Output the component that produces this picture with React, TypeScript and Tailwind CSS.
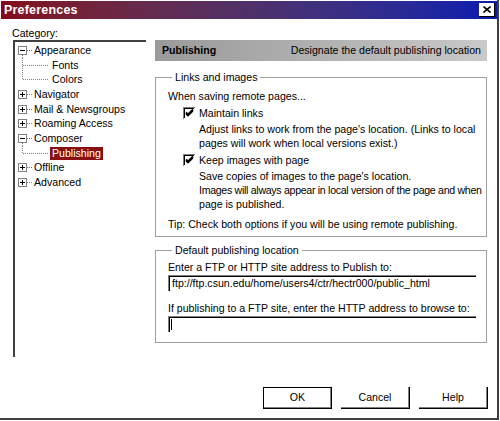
import React from 'react';

const font = { fontFamily: '"Liberation Sans", Arial, sans-serif' };

type Node = { label: string; level: 0 | 1; expander?: 'plus' | 'minus'; last?: boolean; selected?: boolean };

const tree: Node[] = [
  { label: 'Appearance', level: 0, expander: 'minus' },
  { label: 'Fonts', level: 1 },
  { label: 'Colors', level: 1, last: true },
  { label: 'Navigator', level: 0, expander: 'plus' },
  { label: 'Mail & Newsgroups', level: 0, expander: 'plus' },
  { label: 'Roaming Access', level: 0, expander: 'plus' },
  { label: 'Composer', level: 0, expander: 'minus' },
  { label: 'Publishing', level: 1, last: true, selected: true },
  { label: 'Offline', level: 0, expander: 'plus' },
  { label: 'Advanced', level: 0, expander: 'plus' },
];

const Connector: React.FC<{ node: Node }> = ({ node }) => {
  if (node.level === 0) {
    return (
      <svg width="17" height="15" className="shrink-0">
        <rect x="3.5" y="3.5" width="8" height="8" fill="#fff" stroke="#808080" />
        <line x1="5" y1="7.5" x2="10" y2="7.5" stroke="#000" />
        {node.expander === 'plus' && <line x1="7.5" y1="5" x2="7.5" y2="10" stroke="#000" />}
        <line x1="12" y1="7.5" x2="17" y2="7.5" stroke="#808080" strokeDasharray="1 1" />
        {node.expander === 'minus' && (
          <line x1="7.5" y1="12" x2="7.5" y2="15" stroke="#808080" strokeDasharray="1 1" />
        )}
      </svg>
    );
  }
  return (
    <svg width="35" height="15" className="shrink-0">
      <line x1="7.5" y1="0" x2="7.5" y2={node.last ? 7.5 : 15} stroke="#808080" strokeDasharray="1 1" />
      <line x1="8" y1="7.5" x2="34" y2="7.5" stroke="#808080" strokeDasharray="1 1" />
    </svg>
  );
};

const Checkbox: React.FC = () => (
  <svg width="13" height="13" className="shrink-0">
    <line x1="0" y1="0.5" x2="12" y2="0.5" stroke="#808080" />
    <line x1="0.5" y1="0" x2="0.5" y2="12" stroke="#808080" />
    <line x1="1" y1="1.5" x2="11" y2="1.5" stroke="#000" />
    <line x1="1.5" y1="1" x2="1.5" y2="11" stroke="#000" />
    <polyline points="3,5.5 5,7.5 10,2.5" fill="none" stroke="#000" strokeWidth="1.8" />
    <polyline points="3,7 5,9 10,4" fill="none" stroke="#000" strokeWidth="1.2" />
  </svg>
);

const Field: React.FC<{ value?: string; caret?: boolean }> = ({ value, caret }) => (
  <div className="w-[308px] h-[16px] border-t border-l border-[#808080] shadow-[inset_1px_1px_0_#000] flex items-center pl-[3px] leading-none whitespace-nowrap">
    {caret && <span className="w-[1px] h-[11px] bg-black ml-[-1px]" />}
    {value}
  </div>
);

const Button: React.FC<{ label: string; primary?: boolean }> = ({ label, primary }) => (
  <div
    className={`w-[69px] h-[22px] flex items-center justify-center shadow-[inset_-1px_-1px_0_#808080] ${
      primary ? 'border border-black' : 'border-r border-b border-black'
    }`}
  >
    {label}
  </div>
);

export default function App() {
  return (
    <div
      style={font}
      className="w-[499px] h-[420px] bg-white border-r-2 border-b-2 border-[#404040] text-[10.6px] text-black flex flex-col"
    >
      {/* title bar */}
      <div className="mt-[1px] ml-[1px] h-[18px] bg-linear-to-r from-[#840818] to-[#0818b0] flex items-center justify-between pl-[3px] pr-[2px]">
        <span className="text-white font-bold text-[12.5px] tracking-[0.2px]">Preferences</span>
        <div className="w-[16px] h-[14px] bg-white border-r border-b border-black flex items-center justify-center">
          <svg width="8" height="7">
            <path d="M0.5 0.5 L7.5 6.5 M7.5 0.5 L0.5 6.5" stroke="#000" strokeWidth="1.6" />
          </svg>
        </div>
      </div>

      <div className="flex mt-[7px]">
        {/* category tree */}
        <div className="ml-[12px] w-[134px] flex flex-col">
          <div className="h-[14px] leading-[14px]">Category:</div>
          <div className="ml-[1px] h-[317px] border-t-2 border-l-2 border-[#404040] pt-[1px]">
            {tree.map((n) => (
              <div key={n.label} className="h-[14.7px] flex items-center">
                <Connector node={n} />
                <span
                  className={`leading-[13px] px-[2px] whitespace-nowrap ${
                    n.selected ? 'bg-[#8a1010] text-white' : ''
                  }`}
                >
                  {n.label}
                </span>
              </div>
            ))}
          </div>
        </div>

        {/* right panel */}
        <div className="ml-[9px] w-[332px] pt-[14px] flex flex-col">
          <div className="h-[21px] bg-linear-to-r from-[#9a9a9a] to-[#c9c9c9] flex items-center justify-between pl-[7px] pr-[6px]">
            <span className="font-bold text-[10.6px]">Publishing</span>
            <span>Designate the default publishing location</span>
          </div>

          <fieldset className="min-w-0 mt-[9px] border border-[#a0a0a0] pl-[12px] pb-[5px] leading-[14px] whitespace-nowrap">
            <legend className="ml-[4px] px-[3px] leading-[14px]">Links and images</legend>
            <div className="mt-[5px]">When saving remote pages...</div>
            <div className="ml-[15px] mt-[3px] flex items-center gap-[3px]">
              <Checkbox />
              <span>Maintain links</span>
            </div>
            <div className="ml-[31px] mt-[2px]">
              <div>Adjust links to work from the page's location. (Links to local</div>
              <div>pages will work when local versions exist.)</div>
            </div>
            <div className="ml-[15px] mt-[3px] flex items-center gap-[3px]">
              <Checkbox />
              <span>Keep images with page</span>
            </div>
            <div className="ml-[31px] mt-[2px]">
              <div>Save copies of images to the page's location.</div>
              <div className="tracking-[-0.3px]">Images will always appear in local version of the page and when</div>
              <div>page is published.</div>
            </div>
            <div className="mt-[6px]">Tip: Check both options if you will be using remote publishing.</div>
          </fieldset>

          <fieldset className="min-w-0 mt-[6px] border border-[#a0a0a0] pl-[12px] pb-[10px] leading-[14px] whitespace-nowrap">
            <legend className="ml-[4px] px-[3px] leading-[14px]">Default publishing location</legend>
            <div className="mt-[3px]">Enter a FTP or HTTP site address to Publish to:</div>
            <div className="mt-[1px]">
              <Field value="ftp://ftp.csun.edu/home/users4/ctr/hectr000/public_html" />
            </div>
            <div className="mt-[10px]">If publishing to a FTP site, enter the HTTP address to browse to:</div>
            <div className="mt-[1px]">
              <Field caret />
            </div>
          </fieldset>
        </div>
      </div>

      <div className="mt-[30px] flex justify-end gap-[9px] pr-[9px]">
        <Button label="OK" primary />
        <Button label="Cancel" />
        <Button label="Help" />
      </div>
    </div>
  );
}
